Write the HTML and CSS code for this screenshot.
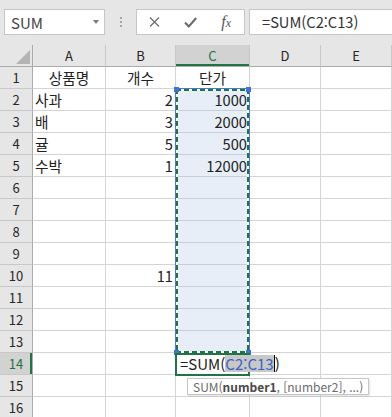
FILE: index.html
```html
<!DOCTYPE html>
<html lang="ko">

<head>
  <meta charset="UTF-8">
  <meta name="viewport" content="width=device-width, initial-scale=1.0">
  <title>SUM</title>
  <link rel="stylesheet" href="styles.css">
</head>

<body>
  <!-- 이름 상자 + 수식 입력줄 -->
  <div class="toolbar">
    <div class="namebox">
      <span>SUM</span>
      <span class="caret"></span>
    </div>
    <div class="grip"><span></span></div>
    <div class="fbuttons">
      <span class="fbtn">
        <svg width="11" height="10" viewBox="0 0 11 10"><path d="M1 0.5 L10 9.5 M10 0.5 L1 9.5" stroke="#6e6e6e" stroke-width="1.3" fill="none"/></svg>
      </span>
      <span class="fbtn">
        <svg width="13" height="11" viewBox="0 0 13 11"><path d="M1 5.5 L4.8 9.5 L12.2 1" stroke="#6a6a6a" stroke-width="2" fill="none"/></svg>
      </span>
      <span class="fbtn fx"><i>f</i><i class="x">x</i></span>
    </div>
    <div class="formula">=SUM(C2:C13)</div>
  </div>

  <!-- 시트 -->
  <div class="sheet">
    <div class="corner"><span></span></div>
    <div class="hd">A</div>
    <div class="hd">B</div>
    <div class="hd on">C</div>
    <div class="hd">D</div>
    <div class="hd">E</div>

    <div class="rh">1</div><div class="ctr">상품명</div><div class="ctr">개수</div><div class="ctr">단가</div><div></div><div></div>
    <div class="rh">2</div><div>사과</div><div class="num">2</div><div class="num sel">1000</div><div></div><div></div>
    <div class="rh">3</div><div>배</div><div class="num">3</div><div class="num sel">2000</div><div></div><div></div>
    <div class="rh">4</div><div>귤</div><div class="num">5</div><div class="num sel">500</div><div></div><div></div>
    <div class="rh">5</div><div>수박</div><div class="num">1</div><div class="num sel">12000</div><div></div><div></div>
    <div class="rh">6</div><div></div><div></div><div class="sel"></div><div></div><div></div>
    <div class="rh">7</div><div></div><div></div><div class="sel"></div><div></div><div></div>
    <div class="rh">8</div><div></div><div></div><div class="sel"></div><div></div><div></div>
    <div class="rh">9</div><div></div><div></div><div class="sel"></div><div></div><div></div>
    <div class="rh">10</div><div></div><div class="num">11</div><div class="sel"></div><div></div><div></div>
    <div class="rh">11</div><div></div><div></div><div class="sel"></div><div></div><div></div>
    <div class="rh">12</div><div></div><div></div><div class="sel"></div><div></div><div></div>
    <div class="rh">13</div><div></div><div></div><div class="sel"></div><div></div><div></div>
    <div class="rh on">14</div><div></div><div></div><div></div><div></div><div></div>
    <div class="rh">15</div><div></div><div></div><div></div><div></div><div></div>
    <div class="rh">16</div><div></div><div></div><div></div><div></div><div></div>

    <!-- 참조 범위 C2:C13 -->
    <div class="range">
      <span class="handle tl"></span>
      <span class="handle tr"></span>
      <span class="handle bl"></span>
      <span class="handle br"></span>
    </div>

    <!-- 편집 중인 셀 C14 -->
    <div class="active">
      <span class="edit">=SUM(<span class="ref">C2:C13</span>)</span>
      <div class="tip">SUM(<b>number1</b>, [number2], ...)</div>
    </div>
  </div>
</body>

</html>
```

FILE: styles.css
```css
body {
  margin: 0;
  width: 392px;
  height: 417px;
  overflow: hidden;
  background: #e6e6e6;
  font-family: "Noto Sans CJK KR", "Noto Sans", sans-serif;
  color: #222;
}

/* 상단 입력줄 */
.toolbar {
  display: flex;
  align-items: flex-start;
  height: 45px;
  padding: 9px 0 0 4px;
  box-sizing: border-box;
}

.namebox {
  display: flex;
  align-items: center;
  justify-content: space-between;
  width: 101px;
  height: 26px;
  padding: 0 5px 0 6px;
  box-sizing: border-box;
  background: #fff;
  border: 1px solid #c6c6c6;
  font-size: 15px;
  color: #444;
}

.namebox .caret {
  border-left: 3.5px solid transparent;
  border-right: 3.5px solid transparent;
  border-top: 4px solid #7a7a7a;
}

.grip {
  display: flex;
  justify-content: center;
  align-items: center;
  width: 31px;
  height: 26px;
}

.grip span {
  height: 10px;
  border-left: 2px dotted #a6a6a6;
}

.fbuttons {
  display: flex;
  align-items: center;
  width: 109px;
  height: 26px;
  box-sizing: border-box;
  background: #fff;
  border: 1px solid #c6c6c6;
}

.fbtn {
  display: flex;
  justify-content: center;
  align-items: center;
  width: 36px;
  height: 24px;
}

.fx {
  font-family: "Liberation Serif", serif;
  font-size: 16px;
  color: #555;
}

.fx .x {
  font-size: 12px;
  margin-top: 3px;
}

.formula {
  flex: 1;
  height: 26px;
  margin-left: 4px;
  padding-left: 12px;
  box-sizing: border-box;
  background: #fff;
  border: 1px solid #c6c6c6;
  border-right: none;
  font-size: 14.67px;
  line-height: 24px;
  color: #333;
}

/* 시트 격자 */
.sheet {
  position: relative;
  display: grid;
  grid-template-columns: 33px 73px 70px 74px 71px 71px;
  grid-auto-rows: 22px;
}

.sheet > div {
  box-sizing: border-box;
  padding: 0 2px;
  background: #fff;
  border-right: 1px solid #d4d4d4;
  border-bottom: 1px solid #d4d4d4;
  font-size: 14.67px;
  line-height: 21px;
  white-space: nowrap;
  overflow: hidden;
}

.sheet > .hd,
.sheet > .rh,
.sheet > .corner {
  background: #e6e6e6;
  border-right-color: #c8c8c8;
  border-bottom-color: #ababab;
  font-size: 13px;
  text-align: center;
  color: #262626;
}

.sheet > .rh {
  border-right-color: #ababab;
  border-bottom-color: #c8c8c8;
}

.sheet > .corner {
  display: flex;
  justify-content: flex-end;
  align-items: flex-end;
  padding: 0 2px 2px 0;
  border-right-color: #ababab;
}

.corner span {
  border-left: 14px solid transparent;
  border-bottom: 14px solid #b4b4b4;
}

.sheet > .hd.on {
  background: #d2d2d2;
  color: #217346;
  box-shadow: inset 0 -2px 0 #217346;
}

.sheet > .rh.on {
  background: #d2d2d2;
  color: #217346;
  box-shadow: inset -2px 0 0 #217346;
}

.sheet > .ctr {
  text-align: center;
}

.sheet > .num {
  text-align: right;
}

.sheet > .sel {
  background: #e8eef8;
  border-bottom-color: #c9ced8;
}

/* 참조 범위 (점선 테두리) */
.sheet > .range {
  position: absolute;
  grid-column: 4 / 5;
  grid-row: 3 / 15;
  left: -1px;
  top: -1px;
  right: 0;
  bottom: -1px;
  padding: 0;
  overflow: visible;
  background:
    repeating-linear-gradient(90deg, #217346 0 5px, #fff 5px 8px) top / 100% 2px no-repeat,
    repeating-linear-gradient(90deg, #217346 0 5px, #fff 5px 8px) bottom / 100% 2px no-repeat,
    repeating-linear-gradient(180deg, #217346 0 5px, #fff 5px 8px) left / 2px 100% no-repeat,
    repeating-linear-gradient(180deg, #217346 0 5px, #fff 5px 8px) right / 2px 100% no-repeat;
  border: 1px solid #4a7bd0;
}

.handle {
  position: absolute;
  width: 5px;
  height: 5px;
  background: #3d74cf;
}

.handle.tl { left: -2px; top: -2px; }
.handle.tr { right: -2px; top: -2px; }
.handle.bl { left: -2px; bottom: -2px; }
.handle.br { right: -2px; bottom: -2px; }

/* 편집 중인 셀 */
.sheet > .active {
  position: absolute;
  grid-column: 4 / 5;
  grid-row: 15 / 16;
  left: -1px;
  top: 0;
  right: 0;
  bottom: -1px;
  padding: 0 0 0 3px;
  background: #fff;
  border: 2px solid #217346;
  overflow: visible;
  font-size: 15px;
  line-height: 17px;
}

.edit {
  color: #222;
}

.edit .ref {
  display: inline-block;
  height: 17px;
  color: #3a62c4;
  background: #c8c8c8;
  border-right: 1px solid #000;
}

.tip {
  position: absolute;
  left: 10px;
  top: 23px;
  height: 17px;
  padding: 0 5px;
  box-sizing: border-box;
  background: #fff;
  border: 1px solid #c6c6c6;
  box-shadow: 1px 1px 2px rgba(0, 0, 0, 0.12);
  font-size: 12px;
  line-height: 15px;
  color: #6b6b6b;
  white-space: nowrap;
}

.tip b {
  color: #4a4a4a;
}
```
